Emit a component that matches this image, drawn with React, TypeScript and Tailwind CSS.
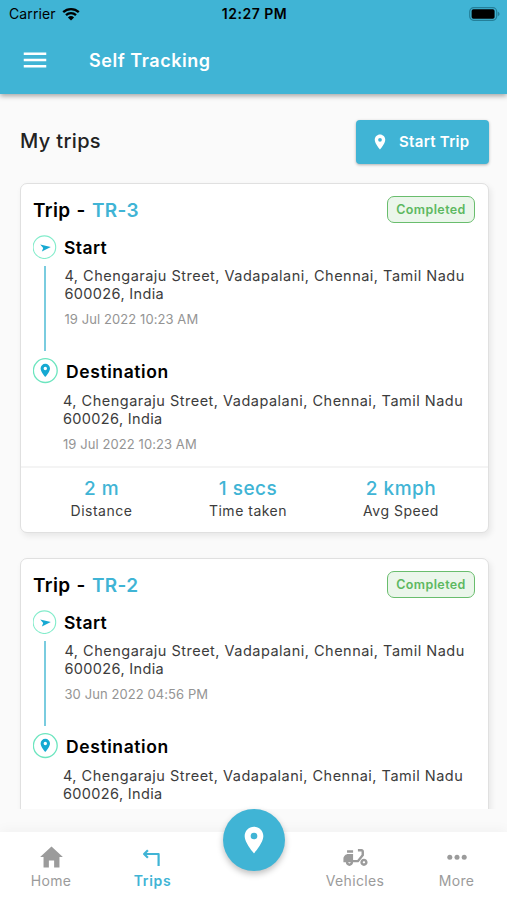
import { IoMdHome } from "react-icons/io"
import { MdLocationOn, MdMenu, MdMoped } from "react-icons/md"

type Trip = {
  id: string
  startedAt: string
  endedAt: string
  address: [string, string]
  distance: string
  duration: string
  speed: string
}

const ADDRESS: [string, string] = [
  "4, Chengaraju Street, Vadapalani, Chennai, Tamil Nadu",
  "600026, India",
]

const trips: Trip[] = [
  {
    id: "TR-3",
    startedAt: "19 Jul 2022 10:23 AM",
    endedAt: "19 Jul 2022 10:23 AM",
    address: ADDRESS,
    distance: "2 m",
    duration: "1 secs",
    speed: "2 kmph",
  },
  {
    id: "TR-2",
    startedAt: "30 Jun 2022 04:56 PM",
    endedAt: "30 Jun 2022 04:58 PM",
    address: ADDRESS,
    distance: "2 m",
    duration: "1 secs",
    speed: "2 kmph",
  },
]

function StatusBar() {
  return (
    <div className="grid h-[27px] grid-cols-[1fr_auto_1fr] items-center pl-[9px] pr-[7px] text-black">
      <div className="flex items-center gap-[6px]">
        <span className="text-[14px] tracking-[0.1px]">Carrier</span>
        <svg viewBox="0 0 18 14" className="h-[14px] w-[18px]">
          <path
            d="M1.2 5.2a11.2 11.2 0 0 1 15.6 0M4 8.2a7.2 7.2 0 0 1 10 0"
            fill="none"
            stroke="black"
            strokeWidth="2.3"
          />
          <path d="M9 13.6 5.9 10.4a4.5 4.5 0 0 1 6.2 0z" />
        </svg>
      </div>
      <span className="text-center text-[14px] font-semibold tracking-[0.5px]">12:27 PM</span>
      <svg viewBox="0 0 31 14" className="h-[14px] w-[31px] justify-self-end">
        <rect x="0.7" y="0.7" width="27" height="12.6" rx="4" fill="none" stroke="#247f99" strokeWidth="1.2" />
        <rect x="2.6" y="2.3" width="23" height="9.4" rx="1.8" />
        <path d="M28.8 4.8c2.3.7 2.3 3.7 0 4.4z" fill="#247f99" />
      </svg>
    </div>
  )
}

function StepIcon({ kind }: { kind: "start" | "end" }) {
  return kind === "start" ? (
    <svg viewBox="0 0 24 24" className="size-6">
      <circle cx="11.4" cy="12.2" r="11.3" fill="white" stroke="#83eccb" strokeWidth="1.1" />
      <path d="M7.2 9.4 17.8 12 8.9 16.6 10.2 13z" fill="#16a9d2" />
    </svg>
  ) : (
    <svg viewBox="0 0 26 26" className="size-[26px]">
      <circle cx="12.3" cy="12.6" r="11.9" fill="white" stroke="#6ce5bf" strokeWidth="1.3" />
      <path
        fillRule="evenodd"
        d="M12.3 5.8a4.7 4.7 0 0 0-4.7 4.7c0 3.5 4.7 8.6 4.7 8.6s4.7-5.1 4.7-8.6a4.7 4.7 0 0 0-4.7-4.7zm0 6.4a1.7 1.7 0 1 1 0-3.4 1.7 1.7 0 0 1 0 3.4z"
        fill="#16a9d2"
      />
    </svg>
  )
}

function Place({ address, time }: { address: [string, string]; time: string }) {
  return (
    <div className="whitespace-nowrap">
      <p className="text-[14.5px] leading-[18.4px] tracking-[0.49px] text-[#3c3c3c]">{address[0]}</p>
      <p className="text-[14.5px] leading-[18.4px] tracking-[0.35px] text-[#3c3c3c]">{address[1]}</p>
      <p className="mt-[7px] text-[13px] leading-4 tracking-[0.08px] text-[#949494]">{time}</p>
    </div>
  )
}

function Stat({ value, label }: { value: string; label: string }) {
  return (
    <div className="flex flex-col items-center">
      <span className="text-[19px] leading-[22px] font-medium tracking-[0.5px] text-[#40b4d5]">{value}</span>
      <span className="text-[14px] leading-[22px] tracking-[0.5px] text-[#3c3c3c]">{label}</span>
    </div>
  )
}

function TripCard({ trip }: { trip: Trip }) {
  return (
    <div className="h-[350px] w-[469px] shrink-0 rounded-[7px] border border-[#e0e0e0] bg-white shadow-[2px_3px_6px_rgba(0,0,0,0.08)]">
      <div className="flex h-[282px] flex-col pl-3 pr-[13px]">
        <div className="mt-3 flex h-[27px] items-center justify-between">
          <h2 className="pt-[3px] text-[19px] font-semibold tracking-[0.35px] text-black">
            Trip <span className="px-[1px]">-</span>{" "}
            <span className="text-[#40b4d5]">{trip.id}</span>
          </h2>
          <span className="flex h-[27px] w-[88px] items-center justify-center rounded-[7px] border-[1.5px] border-[#69bd6d] bg-[#ebf6eb] pt-px text-[12.5px] font-semibold tracking-[0.4px] text-[#5cb860]">
            Completed
          </span>
        </div>
        <div className="mt-3 flex h-6 items-center gap-[7px]">
          <StepIcon kind="start" />
          <h3 className="pt-[3px] text-[17.5px] font-semibold tracking-[0.4px] text-black">Start</h3>
        </div>
        <div className="flex h-[99px] gap-[18px] pl-[11px] pt-[7px]">
          <div className="h-[85px] w-[2px] shrink-0 bg-[#7accdf]" />
          <div className="pl-[0.5px] pt-px">
            <Place address={trip.address} time={trip.startedAt} />
          </div>
        </div>
        <div className="flex h-[26px] items-center gap-[7px]">
          <StepIcon kind="end" />
          <h3 className="pt-[2px] text-[17.5px] font-semibold tracking-[0.6px] text-black">Destination</h3>
        </div>
        <div className="pl-[30px] pt-2">
          <Place address={trip.address} time={trip.endedAt} />
        </div>
      </div>
      <div className="grid grid-cols-[161px_132px_174px] border-t-2 border-[#f4f4f4] pt-[10px]">
        <Stat value={trip.distance} label="Distance" />
        <Stat value={trip.duration} label="Time taken" />
        <Stat value={trip.speed} label="Avg Speed" />
      </div>
    </div>
  )
}

function BottomNav() {
  return (
    <nav className="relative grid h-[68px] shrink-0 grid-cols-[102px_101px_101px_102px_101px] bg-white text-[14px] tracking-[0.35px] text-[#9b9b9b] shadow-[0_-2px_12px_rgba(0,0,0,0.04)]">
      <div className="flex flex-col items-center pt-[11px]">
        <IoMdHome className="h-7 w-[29px]" />
        <span className="pt-px leading-[18px]">Home</span>
      </div>
      <div className="flex flex-col items-center pt-3 text-[#40b4d5]">
        <svg
          viewBox="0 0 28 28"
          className="size-7"
          fill="none"
          stroke="currentColor"
          strokeWidth="2.2"
          strokeLinejoin="round"
        >
          <path d="M19.6 22V10H5.4M8.9 6.2 5.1 10l3.8 3.8" />
        </svg>
        <span className="leading-[18px] font-semibold tracking-[0.7px]">Trips</span>
      </div>
      <div />
      <div className="flex flex-col items-center pt-[11px]">
        <MdMoped className="size-[29px]" />
        <span className="leading-[18px]">Vehicles</span>
      </div>
      <div className="flex flex-col items-center pt-3">
        <svg viewBox="0 0 28 28" className="size-7" fill="currentColor">
          <circle cx="6.8" cy="13.3" r="2.5" />
          <circle cx="14" cy="13.3" r="2.5" />
          <circle cx="21.2" cy="13.3" r="2.5" />
        </svg>
        <span className="leading-[18px]">More</span>
      </div>
      <button className="absolute left-1/2 top-[-23px] flex size-[62px] -translate-x-1/2 items-center justify-center rounded-full bg-[#40b4d5] text-white shadow-[0_3px_6px_rgba(0,0,0,0.25)]">
        <MdLocationOn className="size-8" />
      </button>
    </nav>
  )
}

export default function App() {
  return (
    <div className="flex h-[900px] w-[507px] flex-col overflow-hidden bg-[#fafafa] font-['Inter','Liberation_Sans',sans-serif]">
      <header className="h-[94px] shrink-0 bg-[#40b4d5] shadow-[0_2px_5px_rgba(0,0,0,0.35)]">
        <StatusBar />
        <div className="mt-px flex h-16 items-center gap-[39px] pl-5 text-white">
          <MdMenu className="size-[30px]" />
          <h1 className="text-[18px] font-semibold tracking-[0.55px]">Self Tracking</h1>
        </div>
      </header>

      <main className="flex h-[715px] flex-col overflow-hidden px-5">
        <div className="mt-[26px] flex h-11 w-[469px] shrink-0 items-center justify-between">
          <h2 className="pb-[2px] text-[20px] font-medium tracking-[0.35px] text-[#222]">My trips</h2>
          <button className="flex h-11 w-[133px] items-center gap-[10px] rounded-[4px] bg-[#40b4d5] pl-[15px] text-[15px] font-semibold tracking-[0.3px] text-white shadow-[0_1px_3px_rgba(0,0,0,0.3)]">
            <MdLocationOn className="size-[18px]" />
            Start Trip
          </button>
        </div>
        <div className="mt-[19px] flex flex-col gap-[25px]">
          {trips.map((trip) => (
            <TripCard key={trip.id} trip={trip} />
          ))}
        </div>
      </main>

      <div className="h-[23px] shrink-0" />
      <BottomNav />
    </div>
  )
}
